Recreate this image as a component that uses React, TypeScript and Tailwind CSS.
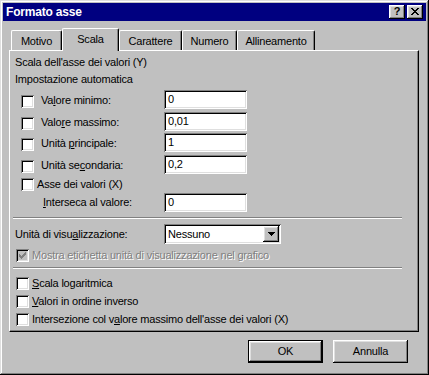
import React from "react";

const RAISED =
  "shadow-[inset_-1px_-1px_#000,inset_1px_1px_#fff,inset_-2px_-2px_#808080,inset_2px_2px_#dfdfdf]";
const SUNKEN =
  "shadow-[inset_1px_1px_#808080,inset_-1px_-1px_#fff,inset_2px_2px_#000,inset_-2px_-2px_#dfdfdf]";

function CheckMark({ color }: { color: string }) {
  const cols = [2, 3, 4, 3, 2, 1, 0];
  return (
    <svg width="13" height="13" viewBox="0 0 13 13" shapeRendering="crispEdges">
      {cols.map((top, i) => (
        <rect key={i} x={3 + i} y={3 + top} width={1} height={3} fill={color} />
      ))}
    </svg>
  );
}

function Box({ checked, disabled }: { checked?: boolean; disabled?: boolean }) {
  return (
    <div
      className={`w-[13px] h-[13px] shrink-0 ${disabled ? "bg-[#c0c0c0]" : "bg-white"} ${SUNKEN}`}
    >
      {checked && <CheckMark color={disabled ? "#808080" : "#000"} />}
    </div>
  );
}

function Field({ value }: { value: string }) {
  return (
    <div className={`w-[83px] h-[19px] bg-white ${SUNKEN} pl-[4px] pt-[3px] leading-[13px]`}>
      {value}
    </div>
  );
}

function Sep() {
  return <div className="ml-[3px] w-[389px] h-[2px] border-t border-b border-t-[#808080] border-b-white" />;
}

export default function App() {
  const valueRows: { h: string; label: React.ReactNode; value: string }[] = [
    { h: "h-[22px]", label: <>Va<span className="underline">l</span>ore minimo:</>, value: "0" },
    { h: "h-[21px]", label: <>Valo<span className="underline">r</span>e massimo:</>, value: "0,01" },
    { h: "h-[22px]", label: <>Unità <span className="underline">p</span>rincipale:</>, value: "1" },
    { h: "h-[23px]", label: <>Unità se<span className="underline">c</span>ondaria:</>, value: "0,2" },
  ];

  const tabs = [
    { name: "Motivo", w: "w-[51px]" },
    { name: "Scala", w: "w-[57px]", active: true },
    { name: "Carattere", w: "w-[63px]" },
    { name: "Numero", w: "w-[55px]" },
    { name: "Allineamento", w: "w-[78px]" },
  ];

  return (
    <div className="w-[429px] h-[375px] bg-[#c0c0c0] p-[3px] shadow-[inset_-1px_-1px_#000,inset_1px_1px_#dfdfdf,inset_-2px_-2px_#808080,inset_2px_2px_#fff] [font-family:'Liberation_Sans',Arial,sans-serif] text-[11px] leading-[13px] text-black tracking-[-0.2px]">
      {/* Title bar */}
      <div className="h-[18px] bg-[#000080] flex items-center pl-[3px] pr-[3px]">
        <div className="text-white font-bold text-[12px] tracking-[-0.2px] flex-1">Formato asse</div>
        <div className={`w-[16px] h-[14px] bg-[#c0c0c0] ${RAISED} flex items-center justify-center font-bold text-[11px] leading-[11px] tracking-normal pb-[1px]`}>
          ?
        </div>
        <div className={`ml-[2px] w-[16px] h-[14px] bg-[#c0c0c0] ${RAISED} flex items-center justify-center pb-[1px]`}>
          <svg width="8" height="7" viewBox="0 0 8 7" shapeRendering="crispEdges">
            <path
              d="M0 0h2v1H0zM6 0h2v1H6zM1 1h2v1H1zM5 1h2v1H5zM2 2h4v1H2zM3 3h2v1H3zM2 4h4v1H2zM1 5h2v1H1zM5 5h2v1H5zM0 6h2v1H0zM6 6h2v1H6z"
              fill="#000"
            />
          </svg>
        </div>
      </div>

      {/* Tabs */}
      <div className="mt-[7px] ml-[6px] h-[22px] flex items-end pl-[2px]">
        {tabs.map((t) =>
          t.active ? (
            <div
              key={t.name}
              className={`${t.w} h-[23px] -mb-[1px] relative z-10 bg-[#c0c0c0] border-t border-l border-white border-r border-r-black rounded-t-[2px] shadow-[inset_-1px_0_#808080] flex items-start justify-center pt-[4px]`}
            >
              {t.name}
            </div>
          ) : (
            <div
              key={t.name}
              className={`${t.w} h-[20px] bg-[#c0c0c0] border-t border-l border-white border-r border-r-black rounded-t-[2px] shadow-[inset_-1px_0_#808080] flex items-start justify-center pt-[4px]`}
            >
              {t.name}
            </div>
          )
        )}
      </div>

      {/* Panel */}
      <div className="ml-[6px] w-[410px] h-[282px] border-t border-l border-white border-b border-r border-b-black border-r-black shadow-[inset_-1px_-1px_#808080] flex flex-col">
        <div className="mt-[5px] ml-[5px]">Scala dell'asse dei valori (Y)</div>
        <div className="mt-[4px] ml-[5px]">Impostazione automatica</div>

        <div className="mt-[4px] flex flex-col">
          {valueRows.map((r, i) => (
            <div key={i} className={`${r.h} flex items-start`}>
              <div className="ml-[11px] mt-[5px]">
                <Box />
              </div>
              <div className="ml-[7px] w-[123px] mt-[4px]">{r.label}</div>
              <Field value={r.value} />
            </div>
          ))}
          <div className="h-[15px] flex items-start">
            <div className="ml-[11px]">
              <Box />
            </div>
            <div className="ml-[3px]">Asse dei valori (X)</div>
          </div>
          <div className="h-[19px] flex items-start">
            <div className="ml-[33px] w-[121px] mt-[3px]">
              <span className="underline">I</span>nterseca al valore:
            </div>
            <Field value="0" />
          </div>
        </div>

        <div className="mt-[5px]">
          <Sep />
        </div>

        <div className="mt-[5px] h-[20px] flex items-center">
          <div className="ml-[5px] w-[149px]">
            Unità di visu<span className="underline">a</span>lizzazione:
          </div>
          <div className={`w-[117px] h-[20px] bg-white ${SUNKEN} p-[2px] flex items-stretch`}>
            <div className="flex-1 pl-[2px] pt-[1px] leading-[14px]">Nessuno</div>
            <div className={`w-[16px] bg-[#c0c0c0] ${RAISED} flex items-center justify-center`}>
              <svg width="7" height="4" viewBox="0 0 7 4" shapeRendering="crispEdges">
                <path d="M0 0h7v1H0zM1 1h5v1H1zM2 2h3v1H2zM3 3h1v1H3z" fill="#000" />
              </svg>
            </div>
          </div>
        </div>

        <div className="mt-[5px] h-[13px] flex items-center">
          <div className="ml-[6px]">
            <Box checked disabled />
          </div>
          <div className="ml-[3px] text-[#808080] [text-shadow:1px_1px_0_#fff]">
            Mostra etichetta unità di visualizzazione nel grafico
          </div>
        </div>

        <div className="mt-[5px]">
          <Sep />
        </div>

        <div className="mt-[8px] h-[13px] flex items-center">
          <div className="ml-[6px]">
            <Box />
          </div>
          <div className="ml-[3px]">
            <span className="underline">S</span>cala logaritmica
          </div>
        </div>
        <div className="mt-[5px] h-[13px] flex items-center">
          <div className="ml-[6px]">
            <Box />
          </div>
          <div className="ml-[3px]">
            <span className="underline">V</span>alori in ordine inverso
          </div>
        </div>
        <div className="mt-[5px] h-[13px] flex items-center">
          <div className="ml-[6px]">
            <Box />
          </div>
          <div className="ml-[3px]">
            Intersezione col v<span className="underline">a</span>lore massimo dell'asse dei valori (X)
          </div>
        </div>
      </div>

      {/* Buttons */}
      <div className="mt-[8px] flex justify-end pr-[18px] gap-[10px]">
        <div className="w-[75px] h-[23px] border border-black">
          <div className={`w-full h-full ${RAISED} flex items-center justify-center`}>OK</div>
        </div>
        <div className={`w-[75px] h-[23px] ${RAISED} flex items-center justify-center`}>Annulla</div>
      </div>
    </div>
  );
}
